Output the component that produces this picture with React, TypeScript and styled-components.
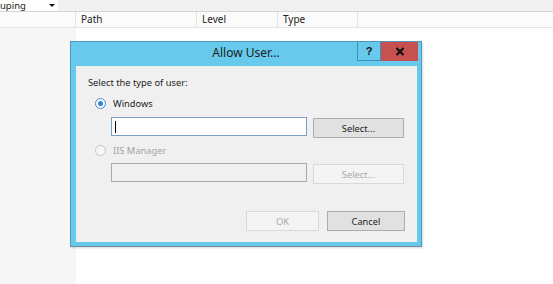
import React from 'react';
import styled, { createGlobalStyle } from 'styled-components';

const uiFont = `"Segoe UI", "Noto Sans", "Open Sans", sans-serif`;
const titleBlue = '#67c9ec';
const frameEdge = '#4f96bb';
const faceGray = '#f0f0f0';

const GlobalStyle = createGlobalStyle`
  html, body {
    margin: 0;
    padding: 0;
    background: #ffffff;
    font-family: ${uiFont};
  }
`;

const Page = styled.div`
  position: relative;
  width: 553px;
  height: 284px;
  overflow: hidden;
  display: flex;
  flex-direction: column;
  background: #ffffff;
`;

const TopBar = styled.div`
  height: 11px;
  display: flex;
  align-items: flex-start;
  background: ${faceGray};
  border-bottom: 1px solid #d4d4d4;
`;

const Combo = styled.div`
  width: 58px;
  height: 11px;
  display: flex;
  align-items: center;
  justify-content: space-between;
  background: #ffffff;
  font-size: 9.5px;
  line-height: 11px;
  color: #222;
  padding-right: 3px;
  box-sizing: border-box;
`;

const ComboArrow = styled.span`
  width: 0;
  height: 0;
  border-left: 3px solid transparent;
  border-right: 3px solid transparent;
  border-top: 3px solid #111;
`;

const HeaderRow = styled.div`
  height: 15px;
  display: flex;
  background: #fbfbfb;
  border-bottom: 1px solid #e3e3e3;
`;

const HeaderCell = styled.div<{ $w?: number }>`
  width: ${p => (p.$w ? `${p.$w}px` : 'auto')};
  flex: ${p => (p.$w ? 'none' : '1')};
  box-sizing: border-box;
  padding-left: 5px;
  border-right: ${p => (p.$w ? '1px solid #e3e3e3' : 'none')};
  font-size: 10px;
  line-height: 15px;
  color: #222;
`;

const Body = styled.div`
  flex: 1;
  display: flex;
`;

const LeftPanel = styled.div`
  width: 76px;
  background: #f6f6f6;
`;

const ListBody = styled.div`
  flex: 1;
  background: #ffffff;
`;

/* dialog window */
const Dialog = styled.div`
  position: absolute;
  left: 70px;
  top: 41px;
  width: 352px;
  height: 206px;
  box-sizing: border-box;
  border: 1px solid ${frameEdge};
  border-bottom-color: #6f8e9c;
  background: ${titleBlue};
  display: flex;
  flex-direction: column;
  padding: 0 4px 4px 5px;
  box-shadow: 1px 1px 2px rgba(0, 0, 0, 0.15);
`;

const TitleBar = styled.div`
  height: 24px;
  display: flex;
  margin: 0 -4px 0 -5px;
`;

const TitleSpacer = styled.div`
  width: 64px;
`;

const Title = styled.div`
  flex: 1;
  text-align: center;
  font-size: 12px;
  line-height: 22px;
  color: #1d1d1d;
`;

const CaptionButtons = styled.div`
  width: 64px;
  display: flex;
  align-items: flex-start;
`;

const HelpButton = styled.div`
  width: 24px;
  height: 19px;
  box-sizing: border-box;
  border: 1px solid #3f8fbd;
  border-top: none;
  display: flex;
  align-items: center;
  justify-content: center;
  font-size: 11px;
  font-weight: bold;
  color: #111;
  font-family: "Liberation Sans", Arial, sans-serif;
`;

const CloseButton = styled.div`
  width: 37px;
  height: 19px;
  background: #c75050;
  display: flex;
  align-items: center;
  justify-content: center;
`;

const Content = styled.div`
  flex: 1;
  background: ${faceGray};
  display: flex;
  flex-direction: column;
  padding: 10px 12px 11px 12px;
  font-size: 9.3px;
  color: #1e1e1e;
`;

const Label = styled.div`
  height: 14px;
  line-height: 14px;
`;

const RadioRow = styled.div<{ $gap: number; $disabled?: boolean }>`
  height: 14px;
  margin-top: ${p => p.$gap}px;
  display: flex;
  align-items: center;
  padding-left: 7px;
  gap: 7px;
  color: ${p => (p.$disabled ? '#a3a3a3' : '#1e1e1e')};
`;

const RadioDot = styled.span<{ $checked?: boolean; $disabled?: boolean }>`
  width: 11px;
  height: 11px;
  box-sizing: border-box;
  border-radius: 50%;
  border: 1px solid ${p => (p.$disabled ? '#c4c4c4' : '#3e86c9')};
  background: ${p => (p.$disabled ? '#f6f6f6' : '#ffffff')};
  display: flex;
  align-items: center;
  justify-content: center;

  &::after {
    content: '';
    display: ${p => (p.$checked ? 'block' : 'none')};
    width: 5px;
    height: 5px;
    border-radius: 50%;
    background: #2f84d6;
  }
`;

const FieldRow = styled.div<{ $gap: number }>`
  margin-top: ${p => p.$gap}px;
  height: 21px;
  display: flex;
  align-items: flex-start;
  padding-left: 23px;
  gap: 6px;
`;

const TextBox = styled.div<{ $disabled?: boolean }>`
  width: 196px;
  height: 19px;
  box-sizing: border-box;
  border: 1px solid ${p => (p.$disabled ? '#a9a9a9' : '#7b9ec6')};
  background: ${p => (p.$disabled ? '#f0f0f0' : '#ffffff')};
  display: flex;
  align-items: center;
  padding-left: 3px;
`;

const Caret = styled.span`
  width: 1px;
  height: 12px;
  background: #000;
`;

const Button = styled.div<{ $w: number; $disabled?: boolean; $offset?: number }>`
  width: ${p => p.$w}px;
  height: 20px;
  margin-top: ${p => p.$offset ?? 0}px;
  box-sizing: border-box;
  border: 1px solid ${p => (p.$disabled ? '#d9d9d9' : '#adadad')};
  background: ${p => (p.$disabled ? '#f4f4f4' : '#e1e1e1')};
  color: ${p => (p.$disabled ? '#a8a8a8' : '#1e1e1e')};
  display: flex;
  align-items: center;
  justify-content: center;
  font-size: 9.3px;
`;

const Footer = styled.div`
  margin-top: 27px;
  display: flex;
  justify-content: flex-end;
  gap: 8px;
`;

const App: React.FC = () => {
  return (
    <>
      <GlobalStyle />
      <Page>
        <TopBar>
          <Combo>
            <span>uping</span>
            <ComboArrow />
          </Combo>
        </TopBar>
        <HeaderRow>
          <HeaderCell $w={76} />
          <HeaderCell $w={121}>Path</HeaderCell>
          <HeaderCell $w={81}>Level</HeaderCell>
          <HeaderCell $w={80}>Type</HeaderCell>
          <HeaderCell />
        </HeaderRow>
        <Body>
          <LeftPanel />
          <ListBody />
        </Body>

        <Dialog>
          <TitleBar>
            <TitleSpacer />
            <Title>Allow User...</Title>
            <CaptionButtons>
              <HelpButton>?</HelpButton>
              <CloseButton>
                <svg width="10" height="9" viewBox="0 0 10 9">
                  <path d="M1.5 1 L8.5 8 M8.5 1 L1.5 8" stroke="#111" strokeWidth="2.2" />
                </svg>
              </CloseButton>
            </CaptionButtons>
          </TitleBar>
          <Content>
            <Label>Select the type of user:</Label>
            <RadioRow $gap={6}>
              <RadioDot $checked />
              <span>Windows</span>
            </RadioRow>
            <FieldRow $gap={7}>
              <TextBox>
                <Caret />
              </TextBox>
              <Button $w={91} $offset={1}>Select...</Button>
            </FieldRow>
            <RadioRow $gap={5} $disabled>
              <RadioDot $disabled />
              <span>IIS Manager</span>
            </RadioRow>
            <FieldRow $gap={6}>
              <TextBox $disabled />
              <Button $w={91} $offset={1} $disabled>Select...</Button>
            </FieldRow>
            <Footer>
              <Button $w={73} $disabled>OK</Button>
              <Button $w={78}>Cancel</Button>
            </Footer>
          </Content>
        </Dialog>
      </Page>
    </>
  );
};

export default App;
